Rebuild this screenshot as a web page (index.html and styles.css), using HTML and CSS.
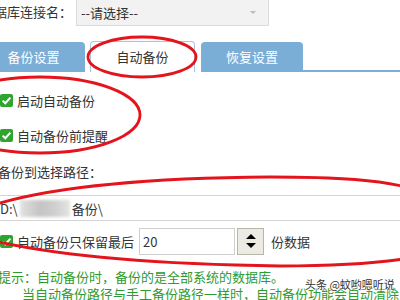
FILE: index.html
```html
<!DOCTYPE html>
<html>
<head>
<meta charset="utf-8">
<link rel="stylesheet" href="styles.css">
</head>
<body>
<div class="page">
  <div class="conn-row">
    <span class="conn-label">数据库连接名：</span>
    <div class="select">
      <span class="select-text">--请选择--</span>
      <span class="select-arrow"></span>
    </div>
  </div>

  <div class="tabs">
    <div class="tab tab-first">备份设置</div>
    <div class="tab tab-active">自动备份</div>
    <div class="tab tab-last">恢复设置</div>
    <div class="tab-rest"></div>
  </div>

  <div class="check-row row1">
    <span class="cb"><svg viewBox="0 0 13 13" width="13" height="13"><path d="M2.6 6.6 L5.3 9.2 L10.4 3.6" fill="none" stroke="#fff" stroke-width="2"/></svg></span>
    <span class="cb-label">启动自动备份</span>
  </div>
  <div class="check-row row2">
    <span class="cb"><svg viewBox="0 0 13 13" width="13" height="13"><path d="M2.6 6.6 L5.3 9.2 L10.4 3.6" fill="none" stroke="#fff" stroke-width="2"/></svg></span>
    <span class="cb-label">自动备份前提醒</span>
  </div>

  <div class="path-label">备份到选择路径：</div>
  <div class="path-box">
    <span class="path-text">D:\</span><span class="blur"></span><span class="path-text">备份\</span>
  </div>

  <div class="keep-row">
    <span class="cb"><svg viewBox="0 0 13 13" width="13" height="13"><path d="M2.6 6.6 L5.3 9.2 L10.4 3.6" fill="none" stroke="#fff" stroke-width="2"/></svg></span>
    <span class="cb-label">自动备份只保留最后</span>
    <div class="num-input">20</div>
    <div class="spin">
      <span class="spin-up"></span>
      <span class="spin-down"></span>
    </div>
    <span class="unit">份数据</span>
  </div>

  <div class="hint">
    <div class="hint1">提示：自动备份时，备份的是全部系统的数据库。</div>
    <div class="hint2">当自动备份路径与手工备份路径一样时，自动备份功能会自动清除</div>
  </div>

  <svg class="marks" width="400" height="300" viewBox="0 0 400 300">
    <ellipse cx="142" cy="57" rx="54" ry="20" fill="none" stroke="#e3141c" stroke-width="2.8"/>
    <ellipse cx="40" cy="115" rx="100" ry="38" fill="none" stroke="#e3141c" stroke-width="2.8"/>
    <path d="M-10 206 C 40 190, 130 178, 270 177 C 340 177, 380 180, 410 188" fill="none" stroke="#e3141c" stroke-width="2.8"/>
    <path d="M-10 240 C 40 252, 130 264, 280 266 C 340 266, 380 263, 410 258" fill="none" stroke="#e3141c" stroke-width="2.8"/>
  </svg>

  <div class="watermark">头条 @蚊哟嗯听说</div>
</div>
</body>
</html>
```

FILE: styles.css
```css
html, body {
  margin: 0;
  padding: 0;
  background: #fff;
}
.page {
  position: relative;
  width: 400px;
  height: 300px;
  overflow: hidden;
  font-family: "Noto Sans CJK SC", "Noto Sans", sans-serif;
  font-size: 13px;
  color: #333;
}
.conn-row {
  display: flex;
  align-items: center;
  height: 28px;
  margin-top: -2px;
}
.conn-label {
  margin-left: -19px;
  width: 95px;
  white-space: nowrap;
  line-height: 28px;
}
.select {
  position: relative;
  width: 191px;
  height: 26px;
  border: 1px solid #dcdcdc;
  background: #f2f2f2;
  display: flex;
  align-items: center;
  box-sizing: content-box;
}
.select-text {
  margin-left: 4px;
  color: #333;
}
.select-arrow {
  position: absolute;
  right: 12px;
  top: 12px;
  width: 0;
  height: 0;
  border-left: 3px solid transparent;
  border-right: 3px solid transparent;
  border-top: 3px solid #bbb;
}
.tabs {
  display: flex;
  align-items: flex-end;
  margin-top: 15px;
  height: 31px;
}
.tab {
  height: 30px;
  line-height: 30px;
  text-align: center;
  color: #fff;
  background: #7aaed7;
  border-radius: 4px 4px 0 0;
  box-sizing: border-box;
}
.tab-first {
  margin-left: -18px;
  width: 103px;
}
.tab-active {
  margin-left: 5px;
  width: 105px;
  height: 31px;
  background: #fff;
  color: #333;
  border: 1px solid #a9c6de;
  border-bottom: none;
}
.tab-last {
  margin-left: 6px;
  width: 102px;
  border-bottom: 2px solid #7aaed7;
}
.tab-rest {
  flex: 1;
  height: 2px;
  background: #7aaed7;
}
.check-row {
  display: flex;
  align-items: center;
  height: 20px;
}
.row1 {
  margin-top: 18px;
}
.row2 {
  margin-top: 15px;
}
.cb {
  width: 13px;
  height: 13px;
  background: #2fa52f;
  border-radius: 2px;
  display: inline-flex;
  flex: none;
}
.cb svg {
  display: block;
}
.cb-label {
  margin-left: 4px;
  white-space: nowrap;
}
.path-label {
  margin-top: 17px;
  margin-left: -2px;
  height: 20px;
  line-height: 20px;
}
.path-box {
  margin-top: 13px;
  margin-left: -2px;
  height: 24px;
  border-top: 1px solid #d4d4d4;
  border-bottom: 1px solid #d4d4d4;
  display: flex;
  align-items: center;
  white-space: nowrap;
}
.path-text {
  color: #333;
}
.path-text:first-child {
  margin-left: 2px;
}
.blur {
  display: inline-block;
  width: 50px;
  height: 17px;
  margin: 0 2px 0 2px;
  background: linear-gradient(90deg, #e2e2e2, #c4c4c4 40%, #cfcfcf 70%, #e4e4e4);
  filter: blur(1.5px);
}
.keep-row {
  display: flex;
  align-items: center;
  height: 28px;
  margin-top: 6px;
}
.num-input {
  margin-left: 5px;
  width: 91px;
  height: 25px;
  border: 1px solid #cfcfcf;
  line-height: 25px;
  padding-left: 3px;
  box-sizing: content-box;
}
.spin {
  margin-left: 2px;
  width: 25px;
  height: 25px;
  border: 1px solid #b9b6a8;
  background: #ecebe3;
  display: flex;
  flex-direction: column;
  align-items: center;
  justify-content: center;
  gap: 4px;
}
.spin-up {
  width: 0;
  height: 0;
  border-left: 5px solid transparent;
  border-right: 5px solid transparent;
  border-bottom: 5px solid #000;
}
.spin-down {
  width: 0;
  height: 0;
  border-left: 5px solid transparent;
  border-right: 5px solid transparent;
  border-top: 5px solid #000;
}
.unit {
  margin-left: 7px;
}
.hint {
  margin-top: 13px;
  color: #2f9a2f;
  white-space: nowrap;
}
.hint1 {
  margin-left: -2px;
  height: 17px;
  line-height: 17px;
}
.hint2 {
  margin-left: 22px;
  height: 17px;
  line-height: 17px;
}
.marks {
  position: absolute;
  left: 0;
  top: 0;
}
.watermark {
  position: absolute;
  left: 305px;
  top: 276px;
  font-size: 11px;
  color: #333;
  text-shadow: 0 0 2px #fff, 0 0 2px #fff, 0 0 2px #fff;
  white-space: nowrap;
}
```
